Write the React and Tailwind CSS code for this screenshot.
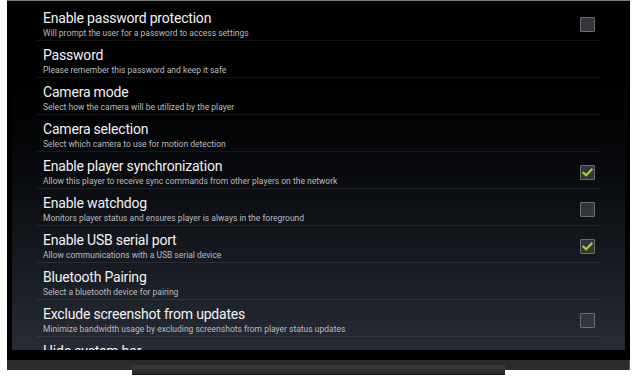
const settings = [
  { title: "Enable password protection", summary: "Will prompt the user for a password to access settings", checkbox: false },
  { title: "Password", summary: "Please remember this password and keep it safe" },
  { title: "Camera mode", summary: "Select how the camera will be utilized by the player" },
  { title: "Camera selection", summary: "Select which camera to use for motion detection" },
  { title: "Enable player synchronization", summary: "Allow this player to receive sync commands from other players on the network", checkbox: true },
  { title: "Enable watchdog", summary: "Monitors player status and ensures player is always in the foreground", checkbox: false },
  { title: "Enable USB serial port", summary: "Allow communications with a USB serial device", checkbox: true },
  { title: "Bluetooth Pairing", summary: "Select a bluetooth device for pairing" },
  { title: "Exclude screenshot from updates", summary: "Minimize bandwidth usage by excluding screenshots from player status updates", checkbox: false },
  { title: "Hide system bar", summary: "Hide the navigation and status bars", checkbox: false },
];

function CheckBox({ checked }) {
  return (
    <span className="w-[15px] h-[15px] shrink-0 rounded-[1px] border border-[#6b6d70] bg-[#333538] flex items-center justify-center">
      {checked && (
        <svg width="11" height="9" viewBox="0 0 11 9" fill="none">
          <path d="M1.5 4.8 L4.2 7.3 L9.6 1.6" stroke="#9bd52a" strokeWidth="2.2" strokeLinecap="square" />
        </svg>
      )}
    </span>
  );
}

export default function App() {
  return (
    <div className="w-[640px] h-[387px] bg-white overflow-hidden font-['Roboto',sans-serif]">
      <div className="ml-[7px] w-[623px] flex flex-col">
        <div className="h-[360px] bg-black border-t border-[#7c7c7c] px-[5px] pb-[10px] flex flex-col">
          <div className="flex-1 overflow-hidden bg-gradient-to-b from-black to-[#272c35] pt-[3px]">
            <ul className="mx-[24px]">
              {settings.map((item) => (
                <li
                  key={item.title}
                  className="flex items-center justify-between border-b border-white/[0.07] pl-[7px] pr-[6px] pt-[5px] pb-[1px]"
                >
                  <div className="min-w-0">
                    <p className="text-[14px] leading-[18px] tracking-[-0.2px] text-[#f2f2f2] whitespace-nowrap">
                      {item.title}
                    </p>
                    <p className="mt-[1px] text-[8.5px] leading-[11px] text-[#b9bbbe] whitespace-nowrap">
                      {item.summary}
                    </p>
                  </div>
                  {item.checkbox !== undefined && <CheckBox checked={item.checkbox} />}
                </li>
              ))}
            </ul>
          </div>
        </div>
        <div className="h-[10px] bg-[#2b2b2b] border-r border-[#5a5a5a]" />
        <div className="relative -mt-[5px] ml-[125px] w-[373px] h-[10px] bg-gradient-to-b from-[#3a3a3a] to-[#2a2a2a] border-b border-[#1a1a1a]" />
      </div>
    </div>
  );
}
